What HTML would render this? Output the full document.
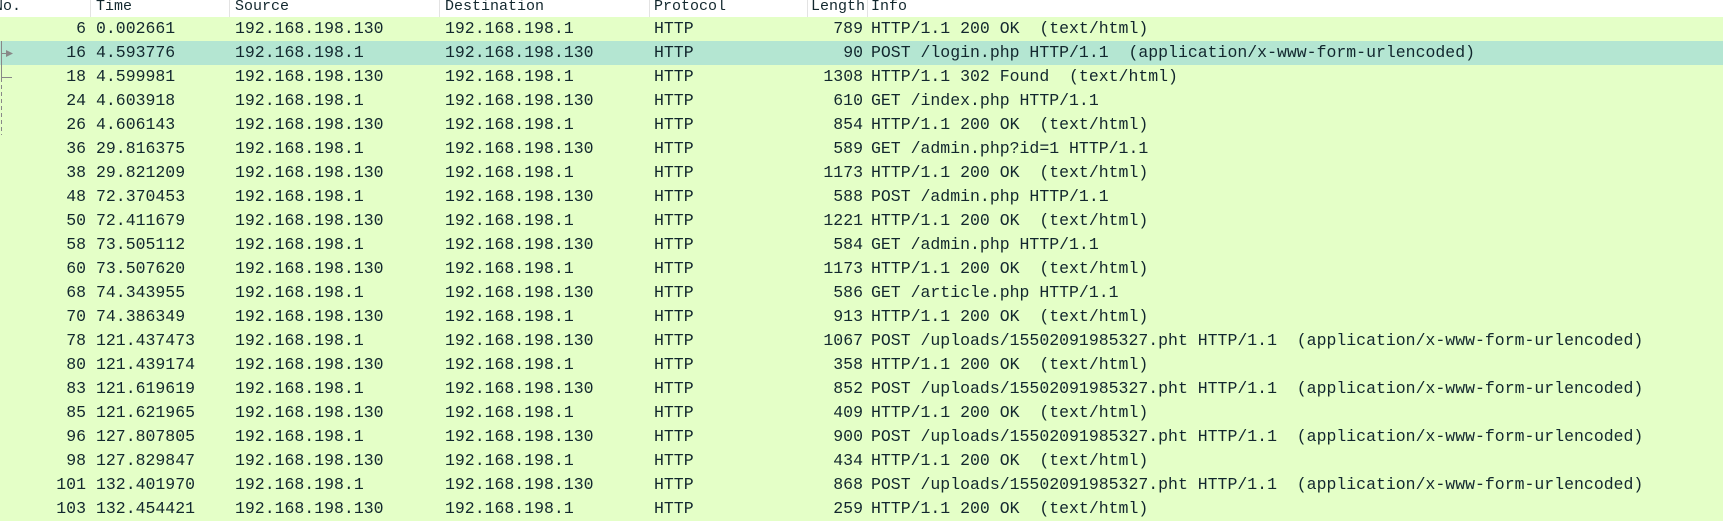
<!DOCTYPE html>
<html><head><meta charset="utf-8"><style>
body{margin:0;width:1723px;height:529px;background:#fff;overflow:hidden;font-family:"Liberation Mono",monospace;font-size:16.5px;color:#12272e;position:relative}
.h{position:absolute;top:0;left:0;width:1723px;height:17px;background:#fff}
.h span{position:absolute;top:-2px;line-height:17px;font-size:15px}
.sep{position:absolute;top:0;width:1px;height:17px;background:#e3e3e3}
.r{position:absolute;left:0;width:1723px;height:24px;background:#e4ffc7;line-height:24px;white-space:pre}
.r.s{background:#b4e6d2}
.r span{position:absolute;top:0}
.no{right:calc(1723px - 86px);text-align:right}
.ln{right:calc(1723px - 863px);text-align:right}
</style></head><body>
<div class="h">
<span style="left:-6px">No.</span>
<div class="sep" style="left:90px"></div><span style="left:96px">Time</span>
<div class="sep" style="left:229px"></div><span style="left:235px">Source</span>
<div class="sep" style="left:439px"></div><span style="left:445px">Destination</span>
<div class="sep" style="left:649px"></div><span style="left:654px">Protocol</span>
<div class="sep" style="left:807px"></div><span style="left:811px">Length</span>
<div class="sep" style="left:867px"></div><span style="left:871px">Info</span>
</div>
<div id="rows"></div>
<script>
var d=[
["6","0.002661","192.168.198.130","192.168.198.1","789","HTTP/1.1 200 OK  (text/html)"],
["16","4.593776","192.168.198.1","192.168.198.130","90","POST /login.php HTTP/1.1  (application/x-www-form-urlencoded)"],
["18","4.599981","192.168.198.130","192.168.198.1","1308","HTTP/1.1 302 Found  (text/html)"],
["24","4.603918","192.168.198.1","192.168.198.130","610","GET /index.php HTTP/1.1"],
["26","4.606143","192.168.198.130","192.168.198.1","854","HTTP/1.1 200 OK  (text/html)"],
["36","29.816375","192.168.198.1","192.168.198.130","589","GET /admin.php?id=1 HTTP/1.1"],
["38","29.821209","192.168.198.130","192.168.198.1","1173","HTTP/1.1 200 OK  (text/html)"],
["48","72.370453","192.168.198.1","192.168.198.130","588","POST /admin.php HTTP/1.1"],
["50","72.411679","192.168.198.130","192.168.198.1","1221","HTTP/1.1 200 OK  (text/html)"],
["58","73.505112","192.168.198.1","192.168.198.130","584","GET /admin.php HTTP/1.1"],
["60","73.507620","192.168.198.130","192.168.198.1","1173","HTTP/1.1 200 OK  (text/html)"],
["68","74.343955","192.168.198.1","192.168.198.130","586","GET /article.php HTTP/1.1"],
["70","74.386349","192.168.198.130","192.168.198.1","913","HTTP/1.1 200 OK  (text/html)"],
["78","121.437473","192.168.198.1","192.168.198.130","1067","POST /uploads/15502091985327.pht HTTP/1.1  (application/x-www-form-urlencoded)"],
["80","121.439174","192.168.198.130","192.168.198.1","358","HTTP/1.1 200 OK  (text/html)"],
["83","121.619619","192.168.198.1","192.168.198.130","852","POST /uploads/15502091985327.pht HTTP/1.1  (application/x-www-form-urlencoded)"],
["85","121.621965","192.168.198.130","192.168.198.1","409","HTTP/1.1 200 OK  (text/html)"],
["96","127.807805","192.168.198.1","192.168.198.130","900","POST /uploads/15502091985327.pht HTTP/1.1  (application/x-www-form-urlencoded)"],
["98","127.829847","192.168.198.130","192.168.198.1","434","HTTP/1.1 200 OK  (text/html)"],
["101","132.401970","192.168.198.1","192.168.198.130","868","POST /uploads/15502091985327.pht HTTP/1.1  (application/x-www-form-urlencoded)"],
["103","132.454421","192.168.198.130","192.168.198.1","259","HTTP/1.1 200 OK  (text/html)"]];
var h="";
d.forEach(function(r,i){
h+='<div class="r'+(i==1?' s':'')+'" style="top:'+(17+i*24)+'px"><span class="no">'+r[0]+'</span><span style="left:96px">'+r[1]+'</span><span style="left:235px">'+r[2]+'</span><span style="left:445px">'+r[3]+'</span><span style="left:654px">HTTP</span><span class="ln">'+r[4]+'</span><span style="left:871px">'+r[5]+'</span></div>';
});
document.getElementById("rows").innerHTML=h;
</script>
<svg style="position:absolute;left:0;top:0" width="20" height="140">
<line x1="1.5" y1="41" x2="1.5" y2="78" stroke="#888" stroke-width="1"/>
<line x1="1.5" y1="78" x2="1.5" y2="135" stroke="#888" stroke-width="1" stroke-dasharray="4,3"/>
<line x1="1" y1="53.5" x2="6" y2="53.5" stroke="#888"/>
<polygon points="6,50 13,53.5 6,57" fill="#888"/>
<line x1="1" y1="77.5" x2="12" y2="77.5" stroke="#888"/>
</svg>
</body></html>
